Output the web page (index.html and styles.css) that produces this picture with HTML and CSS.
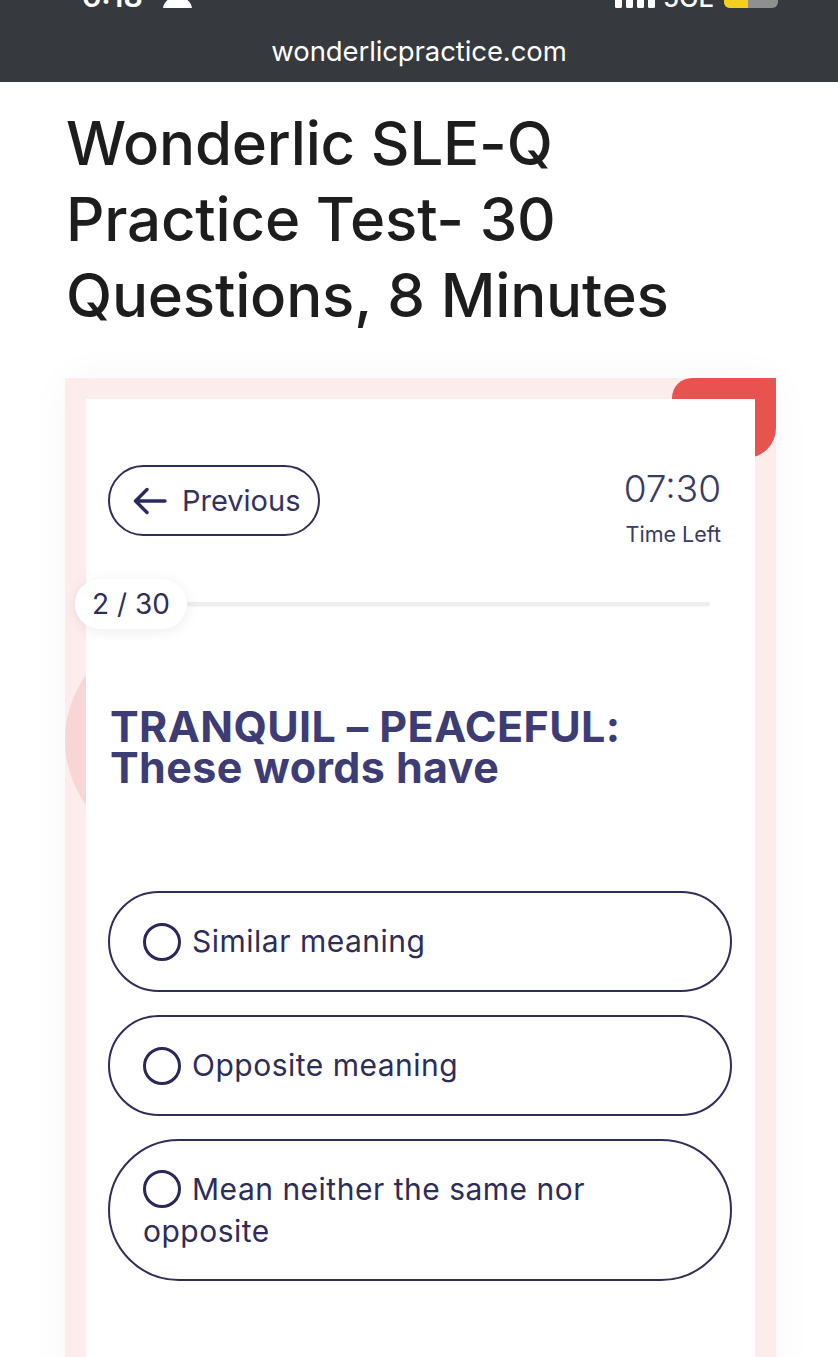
FILE: index.html
```html
<!DOCTYPE html>
<html lang="en">
<head>
<meta charset="utf-8">
<title>Wonderlic SLE-Q Practice Test</title>
<link rel="stylesheet" href="styles.css">
</head>
<body>
<header class="browser-bar">
  <svg class="sys" width="838" height="10" viewBox="0 0 838 10" aria-hidden="true">
    <text x="82" y="7" class="sys-time">6:18</text>
    <path d="M163 8 C164 1 170 -3 177.5 -3 C185 -3 191 1 192 8 Z" fill="#fff"/>
    <rect x="615" y="-10" width="7" height="18" rx="1.5" fill="#fff"/>
    <rect x="626" y="-10" width="7" height="18" rx="1.5" fill="#fff"/>
    <rect x="637" y="-10" width="7" height="18" rx="1.5" fill="#fff"/>
    <rect x="648" y="-10" width="7" height="18" rx="1.5" fill="#fff"/>
    <text x="663" y="7" class="sys-net">5GE</text>
    <rect x="724" y="-14" width="54" height="22" rx="6" fill="#8e8f91"/>
    <rect x="724" y="-14" width="24" height="22" rx="6" fill="#f4cf1e"/>
    <rect x="740" y="-14" width="8" height="22" fill="#f4cf1e"/>
  </svg>
  <div class="url">wonderlicpractice.com</div>
</header>

<main class="page">
  <h1 class="title">Wonderlic SLE-Q Practice Test- 30 Questions, 8 Minutes</h1>

  <section class="card">
    <div class="blob-red"></div>
    <div class="blob-pink"></div>
    <div class="panel">
      <div class="quiz-head">
        <button class="prev-btn" type="button">
          <svg width="34" height="28" viewBox="0 0 34 28" aria-hidden="true">
            <path d="M32 14H3M14 2.5L2.5 14L14 25.5" fill="none" stroke="#2b2a5c" stroke-width="3.4" stroke-linecap="round" stroke-linejoin="round"/>
          </svg>
          <span>Previous</span>
        </button>
        <div class="timer">
          <div class="timer-value">07:30</div>
          <div class="timer-label">Time Left</div>
        </div>
      </div>

      <div class="progress">
        <div class="progress-count">2 / 30</div>
        <div class="progress-track"></div>
      </div>

      <h2 class="question">TRANQUIL – PEACEFUL: These words have</h2>

      <div class="options">
        <label class="option"><span class="radio"></span>Similar meaning</label>
        <label class="option"><span class="radio"></span>Opposite meaning</label>
        <label class="option"><span class="radio"></span>Mean neither the same nor opposite</label>
      </div>
    </div>
  </section>
</main>
</body>
</html>
```

FILE: styles.css
```css
* { box-sizing: border-box; }

html, body {
  margin: 0;
  padding: 0;
  background: #ffffff;
}

body {
  font-family: Inter, "Noto Sans", "Liberation Sans", sans-serif;
  overflow: hidden;
}

.browser-bar {
  height: 82px;
  background: #36393d;
  display: flex;
  flex-direction: column;
}

.sys {
  display: block;
  overflow: hidden;
}

.sys-time {
  font-family: Inter, "Liberation Sans", sans-serif;
  font-size: 30px;
  font-weight: 600;
  fill: #ffffff;
}

.sys-net {
  font-family: Inter, "Liberation Sans", sans-serif;
  font-size: 26px;
  font-weight: 500;
  fill: #ffffff;
}

.url {
  margin-top: 24px;
  text-align: center;
  color: #ffffff;
  font-size: 27.5px;
  line-height: 34px;
  letter-spacing: -0.1px;
}

.page {
  padding: 0 62px 0 65px;
}

.title {
  margin: 23px 0 0 1px;
  font-size: 60px;
  line-height: 76px;
  font-weight: 500;
  color: #1d1d1d;
  letter-spacing: -0.2px;
}

.card {
  position: relative;
  margin-top: 45px;
  background: #fcecec;
  padding: 21px 21px 0 21px;
  overflow: hidden;
  box-shadow: 0 0 40px rgba(0, 0, 0, 0.035);
}

.blob-red {
  position: absolute;
  top: 0;
  right: 0;
  width: 104px;
  height: 80px;
  background: #e8534f;
  border-radius: 20px 0 30px 0;
}

.blob-pink {
  position: absolute;
  left: 0;
  top: 251px;
  width: 222px;
  height: 222px;
  border-radius: 50%;
  background: #f8d6d6;
}

.panel {
  position: relative;
  z-index: 1;
  background: #ffffff;
  padding: 66px 23px 120px 22px;
}

.quiz-head {
  display: flex;
  justify-content: space-between;
  align-items: flex-start;
}

.prev-btn {
  display: flex;
  align-items: center;
  gap: 15px;
  height: 71px;
  padding: 0 18px 0 23px;
  border: 2px solid #2f2d5a;
  border-radius: 36px;
  background: #ffffff;
  font-family: inherit;
  font-size: 29px;
  color: #33325e;
  cursor: pointer;
}

.prev-btn svg { display: block; }

.timer {
  margin: 2px 11px 0 0;
  text-align: right;
  color: #3b3a63;
}

.timer-value {
  font-size: 37px;
  line-height: 44px;
  font-weight: 300;
}

.timer-label {
  margin-top: 10px;
  font-size: 21.5px;
  line-height: 27px;
}

.progress {
  display: flex;
  align-items: center;
  margin: 31px 22px 0 -33px;
}

.progress-count {
  height: 50px;
  padding: 0 17px 0 17px;
  display: flex;
  align-items: center;
  border-radius: 25px;
  background: #ffffff;
  box-shadow: 0 2px 14px rgba(0, 0, 0, 0.08);
  font-size: 28px;
  color: #2f2e55;
  position: relative;
  z-index: 1;
}

.progress-track {
  flex: 1;
  height: 4px;
  background: #eeeeee;
  border-radius: 2px;
  box-shadow: 0 1px 2px rgba(0, 0, 0, 0.04);
}

.question {
  margin: 77px 0 0 2px;
  max-width: 600px;
  font-size: 43px;
  line-height: 41px;
  font-weight: 700;
  color: #3e3c74;
  letter-spacing: 0.4px;
}

.options {
  margin-top: 103px;
  display: flex;
  flex-direction: column;
  gap: 23px;
}

.option {
  display: block;
  border: 2px solid #2f2d5a;
  border-radius: 999px;
  padding: 27px 90px 27px 33px;
  font-size: 30px;
  line-height: 42px;
  letter-spacing: 0.5px;
  color: #2e2d57;
  cursor: pointer;
}

.radio {
  display: inline-block;
  width: 38px;
  height: 38px;
  margin-right: 11px;
  border: 3.8px solid #2a2858;
  border-radius: 50%;
  vertical-align: middle;
  position: relative;
  top: -2px;
}
```
